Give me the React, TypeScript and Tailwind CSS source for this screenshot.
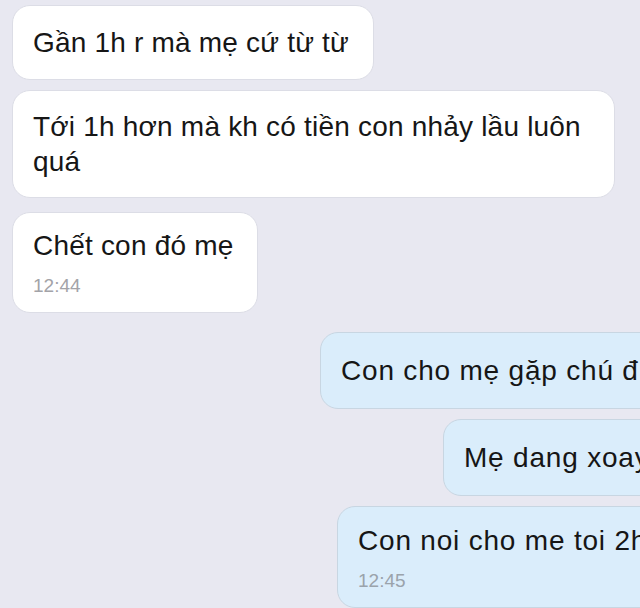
import React from "react";

function Left({ children, time, className = "" }: { children: React.ReactNode; time?: string; className?: string }) {
  return (
    <div className={"self-start rounded-[18px] border border-[#dcdde6] bg-white pl-5 pr-6 " + className}>
      <div className="text-[28px] leading-[35px] tracking-[0.2px] text-[#161616]">{children}</div>
      {time && <div className="mt-[12px] text-[19px] leading-[22px] text-[#a3a3a8]">{time}</div>}
    </div>
  );
}

function Right({ children, time, className = "" }: { children: React.ReactNode; time?: string; className?: string }) {
  return (
    <div className={"shrink-0 whitespace-nowrap rounded-[18px] border border-[#c8d6e2] bg-[#daedfb] pl-5 pr-6 " + className}>
      <div className="text-[28px] leading-[35px] tracking-[0.8px] text-[#161616]">{children}</div>
      {time && <div className="mt-[12px] text-[19px] leading-[22px] text-[#9aa3ab]">{time}</div>}
    </div>
  );
}

export default function App() {
  return (
    <div
      className="h-[608px] w-[640px] overflow-hidden bg-[#e8e8f1]"
      style={{ fontFamily: '"Liberation Sans", Arial, sans-serif' }}
    >
      <div className="flex flex-col px-3 pt-[5px]">
        <Left className="py-[19px]">Gần 1h r mà mẹ cứ từ từ</Left>
        <Left className="mt-[10px] w-[603px] py-[18px]">
          Tới 1h hơn mà kh có tiền con nhảy lầu luôn
          <br />
          quá
        </Left>
        <Left className="mt-[14px] pt-[15px] pb-[15px]" time="12:44">
          Chết con đó mẹ
        </Left>
      </div>
      <div className="mt-[19px] flex flex-col">
        <Right className="ml-[320px] w-[400px] py-[20px]">Con cho mẹ gặp chú đ</Right>
        <Right className="ml-[443px] mt-[10px] w-[300px] py-[20px]">Mẹ dang xoay</Right>
        <Right className="ml-[337px] mt-[10px] w-[400px] pt-[16px] pb-[15px]" time="12:45">
          Con noi cho me toi 2h
        </Right>
      </div>
    </div>
  );
}
